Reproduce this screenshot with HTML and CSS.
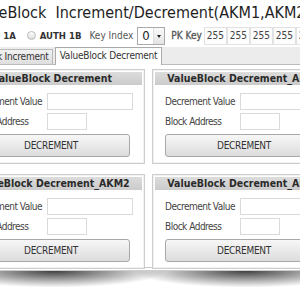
FILE: index.html
```html
<!DOCTYPE html>
<html lang="en">
<head>
  <meta charset="UTF-8" />
  <title>ValueBlock Increment/Decrement</title>
  <link rel="stylesheet" href="styles.css">
</head>
<body>
  <div class="window">
    <h1 class="title">ValueBlock  Increment/Decrement(AKM1,AKM2)</h1>

    <!-- Auth / key row -->
    <div class="toolbar">
      <label class="radio"><span class="dot"></span>AUTH 1A</label>
      <label class="radio"><span class="dot"></span>AUTH 1B</label>
      <span class="lbl">Key Index</span>
      <div class="select"><span class="val">0</span><span class="arrow"></span></div>
      <span class="lbl pk">PK Key</span>
      <div class="keys">
        <span class="key">255</span>
        <span class="key">255</span>
        <span class="key">255</span>
        <span class="key">255</span>
        <span class="key">255</span>
        <span class="key">255</span>
      </div>
    </div>

    <!-- Tabs -->
    <div class="tabs">
      <div class="tab">ValueBlock Increment</div>
      <div class="tab active">ValueBlock Decrement</div>
    </div>

    <div class="tab-body">
      <div class="grid">
        <div class="panel">
          <div class="panel-head">ValueBlock Decrement</div>
          <div class="row"><span class="label">Decrement Value</span><span class="input wide"></span></div>
          <div class="row"><span class="label">Block Address</span><span class="input"></span></div>
          <div class="button">DECREMENT</div>
        </div>
        <div class="panel">
          <div class="panel-head">ValueBlock Decrement_AKM1</div>
          <div class="row"><span class="label">Decrement Value</span><span class="input wide"></span></div>
          <div class="row"><span class="label">Block Address</span><span class="input"></span></div>
          <div class="button">DECREMENT</div>
        </div>
        <div class="panel">
          <div class="panel-head">ValueBlock Decrement_AKM2</div>
          <div class="row"><span class="label">Decrement Value</span><span class="input wide"></span></div>
          <div class="row"><span class="label">Block Address</span><span class="input"></span></div>
          <div class="button">DECREMENT</div>
        </div>
        <div class="panel">
          <div class="panel-head">ValueBlock Decrement_AKM2</div>
          <div class="row"><span class="label">Decrement Value</span><span class="input wide"></span></div>
          <div class="row"><span class="label">Block Address</span><span class="input"></span></div>
          <div class="button">DECREMENT</div>
        </div>
      </div>
    </div>
  </div>
  <div class="shadow"></div>
</body>
</html>
```

FILE: styles.css
```css
body {
  margin: 0;
  width: 300px;
  height: 300px;
  overflow: hidden;
  background: #fff;
  font-family: "DejaVu Sans Condensed", "DejaVu Sans", sans-serif;
  color: #333;
}

.window {
  margin-left: -50px;
  width: 440px;
}

/* Title */
.title {
  margin: 0;
  height: 26px;
  line-height: 25px;
  padding-left: 18px;
  font-size: 16px;
  font-weight: normal;
  color: #1e1e1e;
  white-space: pre;
}

/* Auth / key row */
.toolbar {
  display: flex;
  align-items: center;
  height: 19px;
  padding-left: 11px;
  font-size: 10px;
  white-space: nowrap;
}

.radio {
  display: flex;
  align-items: center;
  font-size: 9.5px;
  font-weight: bold;
  color: #333;
}

.radio + .radio {
  margin-left: 11px;
}

.dot {
  width: 7px;
  height: 7px;
  border: 1px solid #bbb;
  border-radius: 50%;
  background: linear-gradient(#fff, #ddd);
  margin-right: 4px;
}

.lbl {
  color: #555;
  margin-left: 8px;
}

.lbl.pk {
  color: #555;
  margin-left: 6px;
  margin-right: 2px;
  -webkit-text-stroke: 0.3px #555;
}

.select {
  display: flex;
  align-items: center;
  width: 26px;
  height: 16px;
  margin-left: 4px;
  border: 1px solid #aaa;
  background: #fff;
  font-size: 13px;
}

.select .val {
  flex: 1;
  padding-left: 4px;
  color: #222;
}

.select .arrow {
  width: 10px;
  height: 16px;
  border-left: 1px solid #ddd;
  background: linear-gradient(#fafafa, #e4e4e4);
  position: relative;
}

.select .arrow::after {
  content: "";
  position: absolute;
  left: 3px;
  top: 7px;
  border-left: 2px solid transparent;
  border-right: 2px solid transparent;
  border-top: 3px solid #222;
}

.keys {
  display: flex;
}

.key {
  width: 21px;
  height: 16px;
  line-height: 16px;
  border: 1px solid #e2e2e2;
  background: #fdfdfd;
  text-align: center;
  color: #444;
}

/* Tabs */
.tabs {
  display: flex;
  align-items: flex-end;
  height: 17px;
  margin-top: 2px;
  background: #ececec;
  border-bottom: 1px solid #bbb;
  font-size: 10px;
  letter-spacing: -0.2px;
  white-space: nowrap;
}

.tab {
  height: 14px;
  line-height: 14px;
  padding: 0 3px 0 4px;
  border: 1px solid #b8b8b8;
  border-bottom: none;
  background: linear-gradient(#f2f2f2, #dedede);
  color: #333;
}

.tab.active {
  height: 16px;
  line-height: 16px;
  margin-left: 2px;
  margin-bottom: -1px;
  padding: 0 4px 1px 4px;
  background: #fff;
  border-color: #aaa;
}

/* Tab body */
.tab-body {
  height: 202px;
  border: 1px solid #c8c8c8;
  border-top: none;
  box-shadow: 0 2px 0 #fff, 0 3px 0 #ccc;
}

.grid {
  display: grid;
  grid-template-columns: 186px 186px;
  column-gap: 7px;
  row-gap: 10px;
  padding: 4px 0 0 8px;
}

.panel {
  height: 89px;
  padding: 2px;
  border: 1px solid #cdcdcd;
  box-shadow: inset 0 0 0 1px #f2f2f2;
  background: #fff;
}

.panel-head {
  height: 13px;
  line-height: 13px;
  text-align: center;
  font-size: 10.5px;
  font-weight: bold;
  color: #2a2a2a;
  background: linear-gradient(#dcdcdc, #cbcbcb);
  margin-bottom: 8px;
  white-space: nowrap;
  overflow: hidden;
}

.row {
  display: flex;
  align-items: center;
  height: 16px;
  margin-bottom: 4px;
  padding-left: 10px;
  font-size: 10px;
  letter-spacing: -0.5px;
  white-space: nowrap;
}

.label {
  flex: 0 0 75px;
  color: #444;
}

.input {
  width: 38px;
  height: 15px;
  border: 1px solid #dadada;
  background: #fff;
}

.input.wide {
  width: 84px;
}

.button {
  width: 156px;
  height: 21px;
  line-height: 21px;
  margin: 5px 0 0 10px;
  border: 1px solid #a8a8a8;
  border-radius: 3px;
  background: linear-gradient(#f7f7f7, #dcdcdc);
  text-align: center;
  font-size: 10px;
  letter-spacing: -0.3px;
  color: #333;
}

/* Lifted-page shadow */
.shadow {
  height: 26px;
  margin-top: 3px;
  background:
    radial-gradient(ellipse 50% 85% at 18% 0, rgba(0,0,0,0.75), rgba(0,0,0,0) 75%),
    radial-gradient(ellipse 50% 85% at 82% 0, rgba(0,0,0,0.75), rgba(0,0,0,0) 75%);
}
```
